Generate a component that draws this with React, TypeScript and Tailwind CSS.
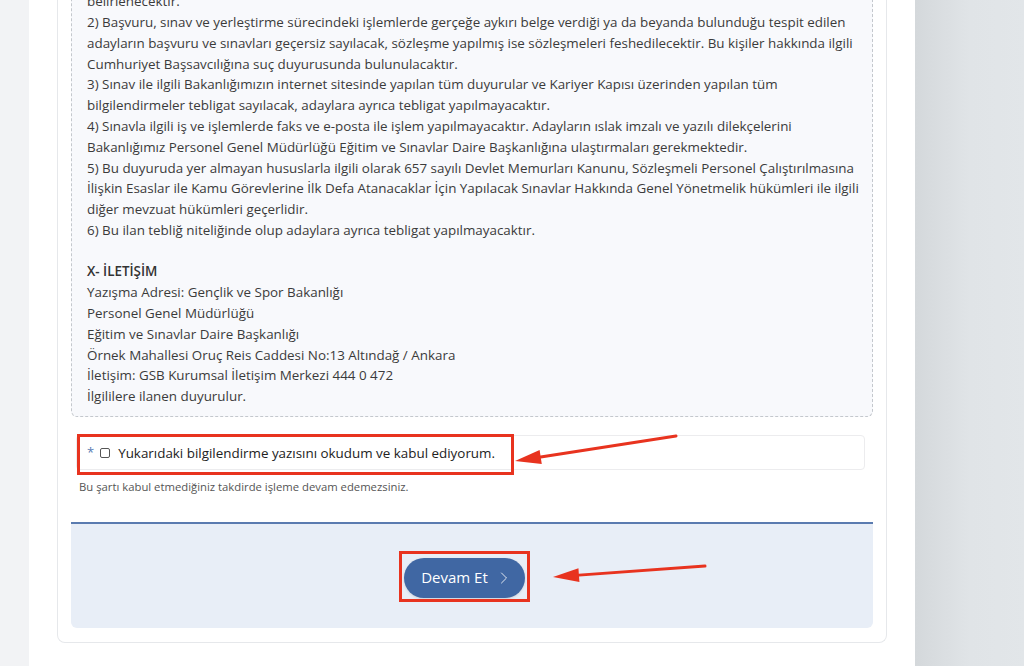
import { ChevronRight } from 'lucide-react';

const rules = [
  'belirlenecektir.',
  '2) Başvuru, sınav ve yerleştirme sürecindeki işlemlerde gerçeğe aykırı belge verdiği ya da beyanda bulunduğu tespit edilen adayların başvuru ve sınavları geçersiz sayılacak, sözleşme yapılmış ise sözleşmeleri feshedilecektir. Bu kişiler hakkında ilgili Cumhuriyet Başsavcılığına suç duyurusunda bulunulacaktır.',
  '3) Sınav ile ilgili Bakanlığımızın internet sitesinde yapılan tüm duyurular ve Kariyer Kapısı üzerinden yapılan tüm bilgilendirmeler tebligat sayılacak, adaylara ayrıca tebligat yapılmayacaktır.',
  '4) Sınavla ilgili iş ve işlemlerde faks ve e-posta ile işlem yapılmayacaktır. Adayların ıslak imzalı ve yazılı dilekçelerini Bakanlığımız Personel Genel Müdürlüğü Eğitim ve Sınavlar Daire Başkanlığına ulaştırmaları gerekmektedir.',
  '5) Bu duyuruda yer almayan hususlarla ilgili olarak 657 sayılı Devlet Memurları Kanunu, Sözleşmeli Personel Çalıştırılmasına İlişkin Esaslar ile Kamu Görevlerine İlk Defa Atanacaklar İçin Yapılacak Sınavlar Hakkında Genel Yönetmelik hükümleri ile ilgili diğer mevzuat hükümleri geçerlidir.',
  '6) Bu ilan tebliğ niteliğinde olup adaylara ayrıca tebligat yapılmayacaktır.',
];

const contact = [
  'Yazışma Adresi: Gençlik ve Spor Bakanlığı',
  'Personel Genel Müdürlüğü',
  'Eğitim ve Sınavlar Daire Başkanlığı',
  'Örnek Mahallesi Oruç Reis Caddesi No:13 Altındağ / Ankara',
  'İletişim: GSB Kurumsal İletişim Merkezi 444 0 472',
  'İlgililere ilanen duyurulur.',
];

// Red annotation arrow drawn over the page
function Arrow({ x1, y1, x2, y2 }: { x1: number; y1: number; x2: number; y2: number }) {
  const ang = Math.atan2(y2 - y1, x2 - x1);
  const len = 26;
  const w = 7;
  const bx = x2 - Math.cos(ang) * len;
  const by = y2 - Math.sin(ang) * len;
  const px = -Math.sin(ang) * w;
  const py = Math.cos(ang) * w;
  return (
    <g>
      <line x1={x1} y1={y1} x2={bx} y2={by} stroke="#e8331f" strokeWidth="3" strokeLinecap="round" />
      <polygon points={`${x2},${y2} ${bx + px},${by + py} ${bx - px},${by - py}`} fill="#e8331f" />
    </g>
  );
}

export default function App() {
  return (
    <div
      className="relative flex h-[666px] w-[1024px] overflow-hidden bg-[#f2f3f5]"
      style={{ fontFamily: '"Open Sans", "Noto Sans", sans-serif' }}
    >
      <div className="w-[29px] shrink-0 bg-[#f2f3f5]" />

      <div className="flex w-[886px] shrink-0 flex-col justify-end bg-white pb-[23px]">
        <div className="ml-[28px] w-[830px] rounded-b-lg border border-t-0 border-[#e6e8eb] px-[13px] pb-[14px]">
          <div className="rounded-b-md border border-t-0 border-dashed border-[#c4c8cd] bg-[#f8f9fc] pl-[15px] pr-[6px] pb-[9px] text-[13.4px] leading-[20.8px] text-[#3b3b3b]">
            {rules.map((r) => (
              <p key={r}>{r}</p>
            ))}
            <p className="h-[20.8px]" />
            <p className="font-semibold text-[#333]">X- İLETİŞİM</p>
            {contact.map((c) => (
              <p key={c}>{c}</p>
            ))}
          </div>

          <div className="relative mt-[18px] ml-[5px] flex h-[35px] w-[789px] items-center rounded border border-[#ececee] bg-white pl-[10px]">
            <span className="text-[13px] text-[#5a7db3]">*</span>
            <span className="ml-[6px] h-[10px] w-[10px] rounded-[2px] border border-[#555]" />
            <span className="ml-[8px] text-[13.4px] text-[#222]">Yukarıdaki bilgilendirme yazısını okudum ve kabul ediyorum.</span>
            <div className="pointer-events-none absolute top-[-2px] left-[0px] h-[41px] w-[437px] border-[3px] border-[#e8331f]" />
          </div>

          <p className="mt-[9px] ml-[8px] text-[11.3px] text-[#555]">
            Bu şartı kabul etmediğiniz takdirde işleme devam edemezsiniz.
          </p>

          <div className="mt-[26px] flex h-[106px] items-center justify-center rounded-b-md border-t-2 border-[#5a7bb0] bg-[#e8eef7] pr-[15px] pt-[3px]">
            <div className="relative">
              <button className="flex h-[40px] w-[121px] items-center justify-center gap-[6px] rounded-full bg-[#4067a3] pl-[6px] text-[15px] text-white shadow-sm">
                Devam Et
                <ChevronRight size={20} strokeWidth={1} />
              </button>
              <div className="pointer-events-none absolute top-[-7px] left-[-5px] h-[51px] w-[131px] border-[3px] border-[#e8331f]" />
            </div>
          </div>
        </div>
      </div>

      <div className="flex-1 bg-gradient-to-r from-[#d4d8db] via-[#e0e4e7] to-[#e2e6e9]" />

      <svg className="pointer-events-none absolute inset-0" width="1024" height="666">
        <Arrow x1={676} y1={436} x2={515} y2={461} />
        <Arrow x1={705} y1={566} x2={553} y2={577} />
      </svg>
    </div>
  );
}
